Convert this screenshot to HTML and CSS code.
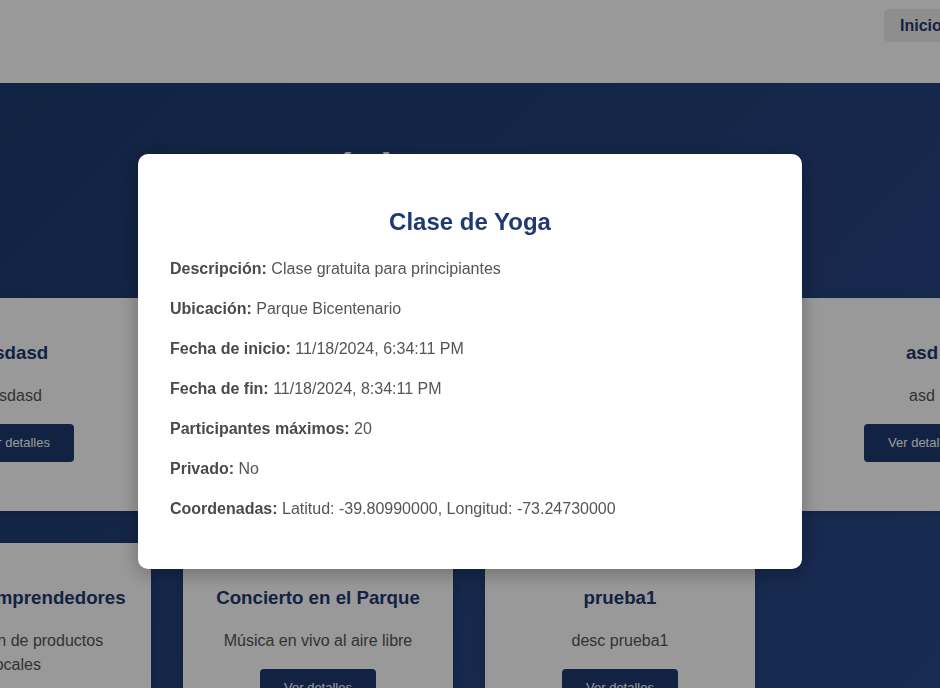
FILE: index.html
```html
<!DOCTYPE html>
<html lang="es">
<head>
<meta charset="utf-8">
<title>Eventos</title>
<link rel="stylesheet" href="styles.css">
</head>
<body>
<header class="site-header">
  <div class="container header-inner">
    <a class="brand" href="#">EventosApp</a>
    <nav class="nav">
      <a class="nav-btn" href="#">Inicio</a>
      <a class="nav-btn" href="#">Eventos</a>
    </nav>
  </div>
</header>

<main class="main">
  <section class="hero">
    <h1 class="hero-title">Próximos Eventos</h1>
    <p class="hero-sub">Descubre y únete a actividades en tu comunidad</p>
  </section>

  <section class="events">
    <div class="container grid">
      <article class="card">
        <h3 class="card-title">asdasd</h3>
        <p class="card-desc">asdasd</p>
        <button class="btn">Ver detalles</button>
      </article>
      <article class="card">
        <h3 class="card-title">Clase de Yoga</h3>
        <p class="card-desc">Clase gratuita para principiantes</p>
        <button class="btn">Ver detalles</button>
      </article>
      <article class="card">
        <h3 class="card-title">Taller de Pintura</h3>
        <p class="card-desc">Aprende técnicas básicas</p>
        <button class="btn">Ver detalles</button>
      </article>
      <article class="card">
        <h3 class="card-title">asd</h3>
        <p class="card-desc">asd</p>
        <button class="btn">Ver detalles</button>
      </article>
      <article class="card">
        <h3 class="card-title">Feria de Emprendedores</h3>
        <p class="card-desc">Exposición de productos locales</p>
        <button class="btn">Ver detalles</button>
      </article>
      <article class="card">
        <h3 class="card-title">Concierto en el Parque</h3>
        <p class="card-desc">Música en vivo al aire libre</p>
        <button class="btn">Ver detalles</button>
      </article>
      <article class="card">
        <h3 class="card-title">prueba1</h3>
        <p class="card-desc">desc prueba1</p>
        <button class="btn">Ver detalles</button>
      </article>
    </div>
  </section>
</main>

<div class="overlay">
  <div class="modal">
    <h2 class="modal-title">Clase de Yoga</h2>
    <p class="modal-row"><strong>Descripción:</strong> Clase gratuita para principiantes</p>
    <p class="modal-row"><strong>Ubicación:</strong> Parque Bicentenario</p>
    <p class="modal-row"><strong>Fecha de inicio:</strong> 11/18/2024, 6:34:11 PM</p>
    <p class="modal-row"><strong>Fecha de fin:</strong> 11/18/2024, 8:34:11 PM</p>
    <p class="modal-row"><strong>Participantes máximos:</strong> 20</p>
    <p class="modal-row"><strong>Privado:</strong> No</p>
    <p class="modal-row"><strong>Coordenadas:</strong> Latitud: -39.80990000, Longitud: -73.24730000</p>
  </div>
</div>
</body>
</html>
```

FILE: styles.css
```css
* {
  box-sizing: border-box;
}

html, body {
  margin: 0;
  padding: 0;
  overflow: hidden;
  height: 100%;
}

body {
  font-family: "Liberation Sans", Arial, sans-serif;
  color: #555;
  background: #1f3a6e;
}

.container {
  width: 1176px;
  flex-shrink: 0;
}

/* Header */
.site-header {
  background: #ffffff;
  height: 83px;
  display: flex;
  justify-content: center;
  padding-top: 9px;
}

.header-inner {
  display: flex;
  justify-content: space-between;
  align-items: flex-start;
}

.brand {
  color: #1e3a70;
  font-weight: bold;
  font-size: 20px;
  text-decoration: none;
  line-height: 33px;
}

.nav {
  display: flex;
  gap: 6px;
}

.nav-btn {
  display: inline-block;
  background: #ededed;
  color: #1e3a70;
  font-weight: bold;
  font-size: 16px;
  line-height: 19px;
  padding: 7px 16px;
  border-radius: 5px;
  text-decoration: none;
}

/* Main */
.main {
  background: linear-gradient(135deg, #1e3a6e 0%, #29498a 100%);
  min-height: 700px;
}

.hero {
  text-align: center;
  padding: 62px 20px 58px;
  color: #ffffff;
}

.hero-title {
  margin: 0 0 20px;
  font-size: 42px;
  font-weight: bold;
}

.hero-sub {
  margin: 0;
  font-size: 18px;
  line-height: 27px;
}

.events {
  display: flex;
  justify-content: center;
  padding: 0 2px 40px 0;
}

.grid {
  display: grid;
  grid-template-columns: repeat(4, 270px);
  gap: 32px;
}

.card {
  background: #ffffff;
  border-radius: 4px;
  padding: 24px 24px 25px;
  text-align: center;
  box-shadow: 0 2px 8px rgba(0, 0, 0, 0.15);
}

.card-title {
  margin: 20px 0;
  font-size: 18.72px;
  color: #1e3a70;
}

.card-desc {
  margin: 0 0 16px;
  font-size: 16px;
  line-height: 24px;
  color: #555;
}

.btn {
  display: inline-block;
  background: #1e3a70;
  color: #ffffff;
  border: none;
  border-radius: 4px;
  font-family: inherit;
  font-size: 13px;
  line-height: 14px;
  padding: 12px 24px;
  cursor: pointer;
}

/* Modal */
.overlay {
  position: fixed;
  inset: 0;
  background: rgba(0, 0, 0, 0.4);
  display: flex;
  justify-content: center;
  align-items: center;
  padding-top: 35px;
}

.modal {
  background: #ffffff;
  width: 90%;
  max-width: 664px;
  padding: 32px;
  border-radius: 10px;
  box-shadow: 0 4px 20px rgba(0, 0, 0, 0.3);
}

.modal-title {
  margin: 22px 0 21px;
  text-align: center;
  font-size: 24px;
  color: #1e3a6f;
}

.modal-row {
  margin: 16px 0;
  font-size: 16px;
  line-height: 24px;
  color: #555;
}

.modal-row strong {
  color: #4a4a4a;
}
```
